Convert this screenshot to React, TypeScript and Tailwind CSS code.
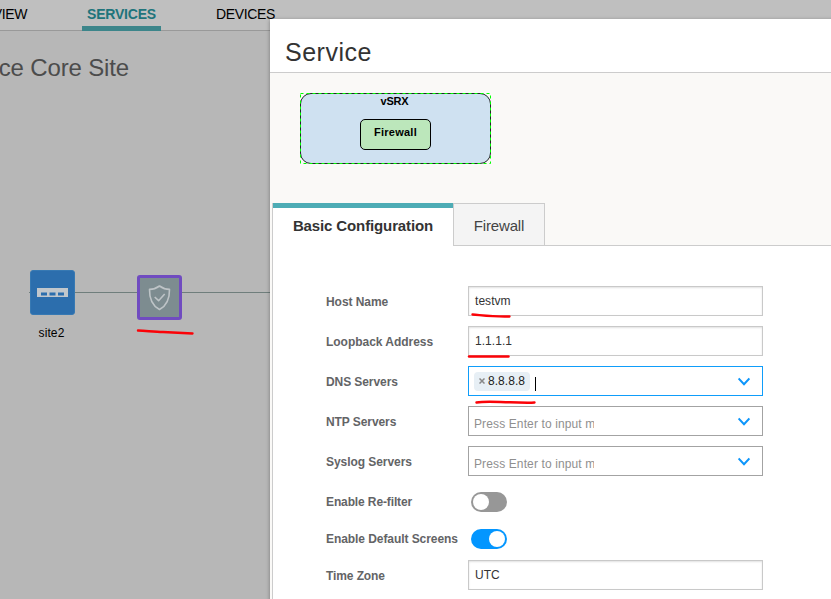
import type { ReactNode } from 'react';

const Chevron = () => (
  <svg className="mt-[2px] mr-3 h-3 w-3 shrink-0" viewBox="0 0 12 12" fill="none" stroke="#0d96fb" strokeWidth="2">
    <path d="M0.6 2.5 L6 8.3 L11.4 2.5" />
  </svg>
);

const Field = ({ label, spacing, gap, children }: { label: string; spacing: string; gap: string; children: ReactNode }) => (
  <div className={`flex h-[30px] items-center ${gap}`}>
    <label className={`w-[142px] shrink-0 pt-[2px] whitespace-nowrap text-[12px] leading-[14px] font-bold text-[#636466] ${spacing}`}>{label}</label>
    {children}
  </div>
);

const TextBox = ({ value, spacing }: { value: string; spacing: string }) => (
  <div className="h-[30px] w-[295px] border border-[#c9c9c9] bg-white pt-[6px] pl-[6px] shadow-[inset_0_1px_2px_rgba(0,0,0,0.12)]">
    <div className={`text-[12px] leading-[16px] text-[#333] ${spacing}`}>{value}</div>
  </div>
);

const EmptyPicker = () => (
  <div className="flex h-[30px] w-[295px] items-center justify-between border border-[#a3a3a3] bg-white">
    <div className="ml-[5px] w-[120px] overflow-hidden pt-[6px] text-[12px] leading-[16px] tracking-[0.12px] whitespace-nowrap text-[#8f8f8f]">
      Press Enter to input multiple
    </div>
    <Chevron />
  </div>
);

const Toggle = ({ on }: { on: boolean }) => (
  <div className={`mt-[2px] ml-[3px] flex h-5 w-9 items-center rounded-full px-[2px] ${on ? 'justify-end bg-[#0396ff]' : 'bg-[#979797]'}`}>
    <div className="h-4 w-4 rounded-full bg-white" />
  </div>
);

const Marks = () => (
  <svg className="pointer-events-none absolute inset-0 h-[599px] w-[831px]" viewBox="0 0 831 599" fill="none" stroke="#fb0207" strokeWidth="2.4" strokeLinecap="round">
    <path d="M138 330.5 C148 331 155 332 163 332 L192.5 333.5" />
    <path d="M472.5 314.5 C484 315.5 494 317 509.5 316.5" />
    <path d="M469 356.5 H508.5" />
    <path d="M476.5 402.5 C486 400.8 497 402 510 402.3 S528 403 534.5 402.5" />
  </svg>
);

export default function App() {
  return (
    <div className="relative h-[599px] w-[831px] overflow-hidden bg-[#b7b7b7] font-['Liberation_Sans',Arial,sans-serif] text-black">
      <nav className="flex h-[31px] border-b border-[#999] bg-[#bfbfbf] text-[14px] leading-[28px]">
        <div className="flex w-[27px] justify-end tracking-[-0.4px] whitespace-nowrap">VIEW</div>
        <div className="ml-[55px] h-[31px] w-[79px] border-b-[5px] border-[#3c858a] text-center text-[14px] font-bold tracking-[-0.22px] whitespace-nowrap text-[#20747b]">
          SERVICES
        </div>
        <div className="ml-[55px] tracking-[-0.35px]">DEVICES</div>
      </nav>
      <h1 className="flex w-[129px] justify-end pt-[21px] text-[24px] leading-[32px] tracking-[-0.15px] whitespace-nowrap text-[#4c4c4c]">
        ce Core Site
      </h1>

      <section className="mt-[186px] flex h-[72px] items-start">
        <div className="mt-[22px] ml-[29px] h-px w-px bg-[#6f7e7c]" />
        <div className="flex w-[45px] flex-col items-center">
          <div className="flex h-[45px] w-[45px] items-center justify-center rounded-[3px] border border-[#3779b3] bg-[#2c6ead]">
            <svg width="31" height="9" viewBox="0 0 31 9">
              <path d="M0 0H31V9H0Z" fill="#c1c7cc" />
              <path d="M4 4.5H10V7.5H4ZM12.5 4.5H18.5V7.5H12.5ZM21 4.5H27V7.5H21Z" fill="#2c6ead" />
            </svg>
          </div>
          <div className="mt-[10px] mr-[2px] text-[12px] leading-[16px] tracking-[0.1px] whitespace-nowrap">site2</div>
        </div>
        <div className="mt-[22px] h-px w-[62px] bg-[#6f7e7c]" />
        <div className="mt-[5px] flex h-[45px] w-[45px] items-center justify-center rounded-[3px] border-[3px] border-[#704bc0] bg-[#7d8c90]">
          <svg width="23" height="26" viewBox="0 0 23 26" fill="none" stroke="#bec4c7" strokeWidth="1.6" strokeLinejoin="round">
            <path d="M11.5 1 C8.5 3.2 5 4.4 1.5 4.4 C1.3 14 4.2 20.5 11.5 24.5 C18.8 20.5 21.7 14 21.5 4.4 C18 4.4 14.5 3.2 11.5 1Z" />
            <path d="M6.7 12 L10.6 15.7 L16.7 9" />
          </svg>
        </div>
        <div className="mt-[22px] h-px w-[90px] bg-[#6f7e7c]" />
      </section>

      <main className="absolute top-[19px] left-[270px] flex h-[600px] w-[600px] flex-col bg-[#faf9f7] shadow-[0_1px_4px_rgba(0,0,0,0.35)]">
        <header className="h-[54px] shrink-0 border-b border-[#ccc] bg-white pt-[17px] pl-[15px]">
          <h2 className="text-[25px] leading-[32px] tracking-[0.5px] text-[#333]">Service</h2>
        </header>

        <div className="h-[130px] shrink-0 pt-[20px] pl-[30px]">
          <div className="relative flex h-[71px] w-[191px] flex-col items-center rounded-[11px] border border-[#24272a] bg-[#cfe1f1] text-[11px] font-bold">
            <svg className="absolute -top-px -left-px h-[71px] w-[191px]" viewBox="0 0 191 71">
              <path d="M0.5 0.5H190.5V70.5H0.5Z" fill="none" stroke="#00ff00" strokeDasharray="3 3" />
            </svg>
            <div className="relative -ml-[2px] leading-[14px] tracking-[-0.2px]">vSRX</div>
            <div className="relative mt-[11px] h-[31px] w-[71px] rounded-[5px] border border-black bg-[#bce7bb] pt-[5px] text-center leading-[15px] tracking-[0.25px]">
              Firewall
            </div>
          </div>
        </div>

        <div className="flex h-[43px] shrink-0 pl-[2px] text-center whitespace-nowrap">
          <div className="flex w-[181px] flex-col border-l border-[#ccc] bg-white">
            <div className="h-[5px] bg-[#4dacb5]" />
            <div className="pt-[9px] text-[15px] leading-[18px] font-bold tracking-[-0.12px] text-[#333]">Basic Configuration</div>
          </div>
          <div className="w-[92px] border border-[#ccc] bg-[#f4f4f4] pt-[13px] text-[15px] leading-[18px] tracking-[-0.15px] text-[#444]">
            Firewall
          </div>
          <div className="grow border-b border-[#ccc]" />
        </div>

        <div className="ml-[2px] grow border-l border-[#ccc] bg-white pt-[40px] pl-[53px]">
          <Field label="Host Name" spacing="tracking-[-0.05px]" gap="mb-[10px]">
            <TextBox value="testvm" spacing="tracking-[0.05px]" />
          </Field>
          <Field label="Loopback Address" spacing="tracking-[-0.03px]" gap="mb-[10px]">
            <TextBox value="1.1.1.1" spacing="tracking-[0.05px]" />
          </Field>
          <Field label="DNS Servers" spacing="tracking-[-0.08px]" gap="mb-[10px]">
            <div className="flex h-[30px] w-[295px] items-center border border-[#0f9dfa] bg-white">
              <div className="ml-[5px] flex h-[19px] w-[56px] items-center rounded-[4px] bg-[#e7eff5] pl-[5px] text-[12px] leading-[17px] text-[#222]">
                <svg className="mr-[3px] h-[6px] w-[6px]" viewBox="0 0 6 6" stroke="#888" strokeWidth="1.5">
                  <path d="M0.5 0.5 L5.5 5.5 M5.5 0.5 L0.5 5.5" />
                </svg>
                <span className="tracking-[0.05px]">8.8.8.8</span>
              </div>
              <div className="mt-[5px] ml-[5px] h-[14px] w-px bg-black" />
              <div className="flex grow justify-end">
                <Chevron />
              </div>
            </div>
          </Field>
          <Field label="NTP Servers" spacing="tracking-[-0.08px]" gap="mb-[10px]">
            <EmptyPicker />
          </Field>
          <Field label="Syslog Servers" spacing="tracking-[-0.06px]" gap="mb-[10px]">
            <EmptyPicker />
          </Field>
          <Field label="Enable Re-filter" spacing="tracking-[-0.12px]" gap="mb-[7px]">
            <Toggle on={false} />
          </Field>
          <Field label="Enable Default Screens" spacing="tracking-[-0.07px]" gap="mb-[7px]">
            <Toggle on />
          </Field>
          <Field label="Time Zone" spacing="tracking-[-0.1px]" gap="mb-0">
            <TextBox value="UTC" spacing="tracking-[0.05px]" />
          </Field>
        </div>
      </main>
      <Marks />
    </div>
  );
}
